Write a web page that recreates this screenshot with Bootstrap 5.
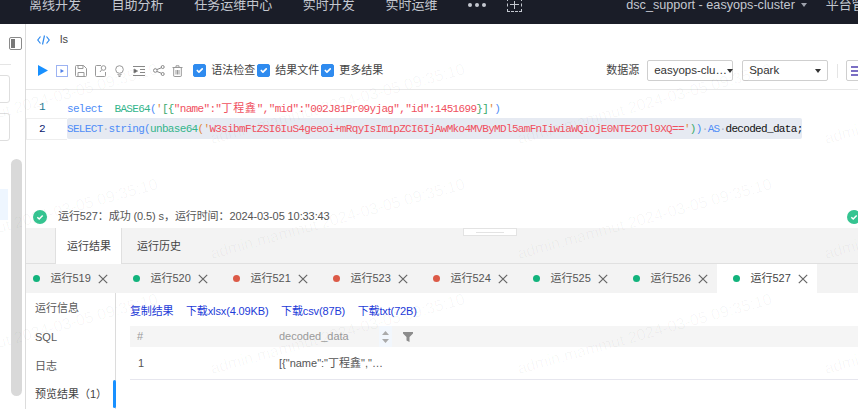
<!DOCTYPE html>
<html lang="zh">
<head>
<meta charset="utf-8">
<title>ls</title>
<link href="https://cdn.jsdelivr.net/npm/bootstrap@5.3.0/dist/css/bootstrap.min.css" rel="stylesheet">
<style>
html,body{height:409px;width:858px;overflow:hidden;margin:0;background:#fff}
body{position:relative;font:11px/1.4 "Liberation Sans","Noto Sans CJK SC",sans-serif;color:#595959}
.topbar{height:24px;background:#1a1d28;color:#c4c8d0;font-size:13px;line-height:14px;padding:0 0 14px 29px;gap:30.6px;overflow:hidden;white-space:nowrap;flex:none}
.topbar>*{flex:none}
.dots{width:18px;gap:3px;margin-right:-10px}
.dots i{width:4px;height:4px;border-radius:50%;background:#c4c8d0}
.plusbox{width:15px;height:14px;border:1px dashed #c4c8d0;position:relative;margin-top:-1px}
.plusbox::before{content:"";position:absolute;left:2px;right:2px;top:5px;height:1px;background:#c4c8d0}
.plusbox::after{content:"";position:absolute;top:2px;bottom:2px;left:6px;width:1px;background:#c4c8d0}
.cluster{margin-left:74px;width:200px;font-size:12.65px}
.cluster::after{content:"";display:inline-block;border:3.5px solid transparent;border-top:4px solid #9ea2ac;border-bottom:0;margin-left:6px;vertical-align:2px}
.platform{margin-left:-31px}
.app{height:385px}
.sidepane{width:26px;border-right:1px solid #dcdcdc;flex:none;overflow:hidden}
.panelicon{width:13px;height:13px;border:1px solid #8a8a8a;border-radius:2px;margin:13px 0 0 9px;padding:1px 6px 1px 1px}
.panelicon i{display:block;height:100%;background:#777}
.sideline{height:1px;width:11px;background:#e5e5e5;margin-top:14px}
.sidebox{height:28px;width:30px;margin:10px 0 0 -20px;border:1px solid #dedede;border-radius:3px}
.sidelow{margin-top:18px}
.sideblue{width:8px;height:31px;background:#eef6ff;margin-top:30px}
.sidescroll{width:11px;height:237px;background:#d9d9d9;border-radius:6px;margin-left:3px}
.mainpane{min-width:0;overflow:hidden}
.filetitle{height:31px;padding-left:11px;gap:10px;color:#444;flex:none}
.toolrow{height:35px;border-bottom:1px solid #e8e8e8;padding:0 0 3px 12px;flex:none;white-space:nowrap;overflow:hidden}
.toolsvg{display:block;flex:none}
.toolrow .toolsvg{margin-right:7.6px}
.toolrow .toolsvg.trash{margin-right:10px}
.form-check-input.chk{width:13px;height:13px;margin:0;border-radius:2px;background-color:#2f8bef;border-color:#2f8bef;flex:none}
.chktext{color:#444;margin:0 2px 0 5px;width:44px;flex:none}
.srclabel{margin-left:221px;color:#444;width:41px;flex:none}
.picker{width:86px;height:21px;border:1px solid #cfcfcf;border-radius:2px;padding:0 6px;margin-right:9px;color:#333;flex:none;font-size:11.5px;line-height:19px;text-align:left}
.picker.dropdown-toggle::after{border-top-color:#333;border-width:4px 3.5px 0;border-bottom:0;margin:0}
.tooldiv{width:1px;height:14px;background:#e5e5e5;margin-right:8px;flex:none}
.listbtn{width:20px;height:21px;border:1px solid #cfcfcf;border-radius:2px;flex:none;padding:5px 4px}
.listbtn i{display:block;height:2px;background:#7b6fc4;margin-bottom:2px}
.editor{height:115px;flex:none;font:11px/22px "Liberation Mono","Noto Sans CJK SC",monospace;padding-top:6px}
.codeln{height:22px}
.lnum{width:41px;padding-left:12px;color:#237893;flex:none;border:1px solid transparent;border-right:0;line-height:20px}
.lnum.cur{color:#0b216f;border-color:#eee}
.lcode{letter-spacing:-.67px;line-height:22px;white-space:pre}
.lcode.sel{background:#e6eaf2;border-radius:2px;height:21px;width:735px;line-height:22px}
.k{color:#4f8df7}.f{color:#33b58b}.s{color:#f0505e}.q{color:#e08a3c}.g{color:#39a96b}.w{color:#a9b4c4}.d{color:#111}
.cjk{letter-spacing:.86px;font-family:"Noto Sans CJK SC",sans-serif}
.statusrow{height:23px;flex:none;padding:1px 0 0 7px;color:#555}
.statusrow .txt{margin-left:11px;letter-spacing:-.1px}
.okicon{flex:none;display:block}
.endok{margin-left:auto;margin-right:-3px}
.tabbar{height:36px;background:#f3f3f3;border-bottom:1px solid #e0e0e0;padding-left:29px;flex:none;position:relative}
.tabbar .nav-link{height:36px;padding:0;line-height:36px;color:#444;font-size:11px;border-radius:0;background:none;border:0}
.tabbar .nav-link.active{width:67px;background:#fff;border:1px solid #e0e0e0;border-width:0 1px;padding-left:11px}
.tabbar .nav-link.other{margin-left:15px}
.tabchip{position:absolute;left:437px;top:0;width:54px;height:8px;background:#fff;border:1px solid #e3e3e3}
.tabchip i{display:block;width:28px;height:1px;background:#e3e3e3;margin:3px auto 0}
.runstrip{height:29px;background:#f3f3f3;flex:none;overflow:hidden;white-space:nowrap}
.runtab{width:100px;flex:none;height:29px;padding-left:16px;color:#555;font-size:11px;position:relative}
.runtab:first-child{margin-left:-9.5px}
.runtab.act{background:#fff;color:#444}
.rundot{width:7px;height:7px;border-radius:50%;background:#12b37c;flex:none;margin-right:11px}
.rundot.bad{background:#dc5a47}
.runx{margin-left:7px;display:block;flex:none}
.reswrap{min-height:0}
.restabs{width:90px;border-right:1px solid #dcdcdc;flex:none;height:116px;padding:1px 0 0 9px;position:relative}
.restabs .nav-link{padding:0;color:#595959;font-size:11px;height:28.8px;line-height:28.8px;background:none;flex:none}
.restabs .nav-link.active{color:#444}
.restabs::after{content:"";position:absolute;right:-1px;bottom:1px;width:3px;height:28px;background:#1890ff;border-radius:2px}
.respane{padding-left:14px;min-width:0}
.reslinks{height:33px;gap:12.5px;padding-top:11px;white-space:nowrap;line-height:15px}
.reslinks a{color:#1d3bd8;text-decoration:none;font-size:11px;letter-spacing:-.13px}
.restable{width:728px;table-layout:fixed;margin:0;font-size:11px;--bs-table-bg:transparent}
.restable th{background:#f5f5f5;color:#9a9a9a;font-weight:400;height:21px;padding:0 0 0 7px;border:0;line-height:21px;vertical-align:middle}
.restable td{height:32px;padding:1px 0 0 8px;border-bottom:1px solid #e6e6ee;color:#555;vertical-align:middle}
.restable th.c2,.restable td.c2{padding-left:0}
.sorter{margin-left:30px;background:#f2f7fd;width:13px;height:21px;display:flex;align-items:center;justify-content:center}
.funnel{margin-left:11px;display:block}
.colnum{width:149px}
.wmlayer{position:absolute;left:0;top:0;width:858px;height:409px;pointer-events:none;overflow:hidden;display:grid;grid-template-columns:repeat(4,307px);grid-auto-rows:115px;padding-top:32px;margin:0;z-index:5}
.wmlayer span{display:block;margin-left:-94px;white-space:nowrap;font:16px/1 "Liberation Sans",sans-serif;color:rgba(0,0,0,.035);align-self:end;transform-origin:left bottom;transform:rotate(-15.5deg);width:260px}
</style>
</head>
<body class="d-flex flex-column">
<div class="topbar d-flex align-items-center">
  <span>离线开发</span><span>自助分析</span><span>任务运维中心</span><span>实时开发</span><span>实时运维</span>
  <span class="dots d-flex align-items-center"><i></i><i></i><i></i></span>
  <span class="plusbox"></span>
  <span class="cluster">dsc_support - easyops-cluster</span>
  <span class="platform">平台管理</span>
</div>
<div class="app d-flex">
  <aside class="sidepane">
    <div class="panelicon"><i></i></div>
    <div class="sideline"></div>
    <div class="sidebox"></div>
    <div class="sidebox"></div>
    <div class="sidelow d-flex"><div class="sideblue"></div><div class="sidescroll"></div></div>
  </aside>
  <main class="mainpane flex-grow-1 d-flex flex-column">
    <div class="filetitle d-flex align-items-center">
      <svg class="toolsvg" width="13" height="10" viewBox="0 0 13 10" fill="none" stroke="#2f8bef" stroke-width="1.2"><path d="M3.5 1.5 .8 5l2.7 3.5M9.500 1.500 12.200 5 9.500 8.500M7.500.5 5.500 9.500"/></svg>
      <span>ls</span>
    </div>
    <div class="toolrow d-flex align-items-center">
      <svg class="toolsvg" width="10" height="11" viewBox="0 0 10 11"><path d="M0 0 10 5.500 0 11z" fill="#1890ff"/></svg>
      <svg class="toolsvg" width="12" height="12" viewBox="0 0 12 12" fill="none"><rect x=".5" y=".5" width="11" height="11" stroke="#9db3f2"/><path d="M4.500 4 8 6 4.500 8z" fill="#4f7fe8"/></svg>
      <svg class="toolsvg" width="12" height="12" viewBox="0 0 12 12" fill="none" stroke="#999"><path d="M1.500.5h7l3 3v7a1 1 0 0 1-1 1h-9a1 1 0 0 1-1-1v-9a1 1 0 0 1 1-1zM3 .5v3h5v-3M3 11.500v-4h6v4"/></svg>
      <svg class="toolsvg" width="12" height="12" viewBox="0 0 12 12" fill="none" stroke="#999"><path d="M6 .5H1.500a1 1 0 0 0-1 1v9a1 1 0 0 0 1 1h8a1 1 0 0 0 1-1V7"/><circle cx="8.500" cy="3" r="2.300"/><path d="M6.500 5 5 7"/></svg>
      <svg class="toolsvg" width="11" height="12" viewBox="0 0 11 12" fill="none" stroke="#999"><circle cx="5.500" cy="4.500" r="3.800"/><path d="M4 9v1h3V9M4.500 11.500h2"/></svg>
      <svg class="toolsvg" width="12" height="10" viewBox="0 0 12 10" fill="none" stroke="#888"><path d="M0 .5h12M7 3.500h5M7 6.500h5M0 9.500h12"/><path d="M1 3v4l3.500-2z" fill="#555"/></svg>
      <svg class="toolsvg" width="12" height="11" viewBox="0 0 12 11" fill="none" stroke="#888"><circle cx="2.300" cy="5.500" r="1.800"/><circle cx="9.700" cy="2" r="1.500"/><circle cx="9.700" cy="9" r="1.500"/><path d="M4 4.500 8.300 2.800M4 6.500 8.300 8.200"/></svg>
      <svg class="toolsvg trash" width="11" height="12" viewBox="0 0 11 12" fill="none" stroke="#999"><path d="M.5 2.500h10M4 2.500V.8h3v1.700M1.700 2.500v8.500a.6.6 0 0 0 .6.5h6.400a.6.6 0 0 0 .6-.5V2.500M4 5v4.500M5.500 5v4.500M7 5v4.500"/></svg>
      <input class="form-check-input chk" type="checkbox" checked aria-label="语法检查"><span class="chktext">语法检查</span>
      <input class="form-check-input chk" type="checkbox" checked aria-label="结果文件"><span class="chktext">结果文件</span>
      <input class="form-check-input chk" type="checkbox" checked aria-label="更多结果"><span class="chktext">更多结果</span>
      <span class="srclabel">数据源</span>
      <div class="picker dropdown-toggle d-flex align-items-center justify-content-between"><span>easyops-clu…</span></div>
      <div class="picker dropdown-toggle d-flex align-items-center justify-content-between"><span>Spark</span></div>
      <div class="tooldiv"></div>
      <div class="listbtn"><i></i><i></i><i></i></div>
    </div>
    <div class="editor">
      <div class="codeln d-flex"><div class="lnum">1</div><div class="lcode"><span class="k">select</span>  <span class="f">BASE64</span><span class="k">(</span><span class="q">'</span><span class="g">[{</span><span class="s">"name":"</span><span class="s cjk">丁程鑫</span><span class="s">","mid":"002J81Pr09yjag","id":1451699</span><span class="g">}]</span><span class="q">'</span><span class="k">)</span></div></div>
      <div class="codeln d-flex"><div class="lnum cur">2</div><div class="lcode sel"><span class="k">SELECT</span><span class="w">·</span><span class="k">string(</span><span class="f">unbase64</span><span class="q">('</span><span class="s">W3sibmFtZSI6IuS4geeoi+mRqyIsIm1pZCI6IjAwMko4MVByMDl5amFnIiwiaWQiOjE0NTE2OTl9XQ==</span><span class="q">'</span><span class="g">)</span><span class="k">)</span><span class="w">·</span><span class="k">AS</span><span class="w">·</span><span class="d">decoded_data;</span></div></div>
    </div>
    <div class="statusrow d-flex align-items-center">
      <svg class="okicon" width="14" height="14" viewBox="0 0 14 14"><circle cx="7" cy="7" r="7" fill="#35c491"/><path d="M4.300 7.200 6.200 9l3.500-3.600" fill="none" stroke="#fff" stroke-width="1.500"/></svg>
      <span class="txt">运行527：成功 (0.5) s，运行时间：2024-03-05 10:33:43</span>
      <svg class="okicon endok" width="14" height="14" viewBox="0 0 14 14"><circle cx="7" cy="7" r="7" fill="#35c491"/><path d="M4.300 7.200 6.200 9l3.500-3.600" fill="none" stroke="#fff" stroke-width="1.500"/></svg>
    </div>
    <div class="tabbar nav">
      <a class="nav-link active" href="#">运行结果</a>
      <a class="nav-link other" href="#">运行历史</a>
      <div class="tabchip"><i></i></div>
    </div>
    <div class="runstrip d-flex">
      <div class="runtab d-flex align-items-center"><span class="rundot"></span><span>运行519</span><svg class="runx" width="10" height="10" viewBox="0 0 10 10" stroke="#666" stroke-width="1.200"><path d="M.8.800l8.400 8.400M9.200.800.800 9.200"/></svg></div>
      <div class="runtab d-flex align-items-center"><span class="rundot"></span><span>运行520</span><svg class="runx" width="10" height="10" viewBox="0 0 10 10" stroke="#666" stroke-width="1.200"><path d="M.8.800l8.400 8.400M9.200.800.800 9.200"/></svg></div>
      <div class="runtab d-flex align-items-center"><span class="rundot bad"></span><span>运行521</span><svg class="runx" width="10" height="10" viewBox="0 0 10 10" stroke="#666" stroke-width="1.200"><path d="M.8.800l8.400 8.400M9.200.800.800 9.200"/></svg></div>
      <div class="runtab d-flex align-items-center"><span class="rundot bad"></span><span>运行523</span><svg class="runx" width="10" height="10" viewBox="0 0 10 10" stroke="#666" stroke-width="1.200"><path d="M.8.800l8.400 8.400M9.200.800.800 9.200"/></svg></div>
      <div class="runtab d-flex align-items-center"><span class="rundot bad"></span><span>运行524</span><svg class="runx" width="10" height="10" viewBox="0 0 10 10" stroke="#666" stroke-width="1.200"><path d="M.8.800l8.400 8.400M9.200.800.800 9.200"/></svg></div>
      <div class="runtab d-flex align-items-center"><span class="rundot"></span><span>运行525</span><svg class="runx" width="10" height="10" viewBox="0 0 10 10" stroke="#666" stroke-width="1.200"><path d="M.8.800l8.400 8.400M9.200.800.800 9.200"/></svg></div>
      <div class="runtab d-flex align-items-center"><span class="rundot"></span><span>运行526</span><svg class="runx" width="10" height="10" viewBox="0 0 10 10" stroke="#666" stroke-width="1.200"><path d="M.8.800l8.400 8.400M9.200.800.800 9.200"/></svg></div>
      <div class="runtab act d-flex align-items-center"><span class="rundot"></span><span>运行527</span><svg class="runx" width="10" height="10" viewBox="0 0 10 10" stroke="#666" stroke-width="1.200"><path d="M.8.800l8.400 8.400M9.200.800.800 9.200"/></svg></div>
    </div>
    <div class="reswrap d-flex flex-grow-1">
      <nav class="restabs nav flex-column flex-nowrap">
        <a class="nav-link" href="#">运行信息</a>
        <a class="nav-link" href="#">SQL</a>
        <a class="nav-link" href="#">日志</a>
        <a class="nav-link active" href="#">预览结果（1）</a>
      </nav>
      <section class="respane flex-grow-1">
        <div class="reslinks d-flex"><a href="#">复制结果</a><a href="#">下载xlsx(4.09KB)</a><a href="#">下载csv(87B)</a><a href="#">下载txt(72B)</a></div>
        <table class="table restable">
          <colgroup><col class="colnum"><col></colgroup>
          <thead><tr><th>#</th><th class="c2"><div class="d-flex align-items-center"><span>decoded_data</span><span class="sorter"><svg width="7" height="12" viewBox="0 0 7 12" fill="#aaa"><path d="M3.500 0 7 4H0zM0 8h7l-3.500 4z"/></svg></span><svg class="funnel" width="10" height="10" viewBox="0 0 10 10"><path d="M0 0h10v1.500L6.500 5v5l-3-1.500V5L0 1.500z" fill="#8c8c8c"/></svg></div></th></tr></thead>
          <tbody><tr><td>1</td><td class="c2">[{"name":"丁程鑫","…</td></tr></tbody>
        </table>
      </section>
    </div>
  </main>
</div>
<div class="wmlayer" aria-hidden="true">
  <span>admin.mammut 2024-03-05 09:35:10</span><span>admin.mammut 2024-03-05 09:35:10</span><span>admin.mammut 2024-03-05 09:35:10</span><span>admin.mammut 2024-03-05 09:35:10</span>
  <span>admin.mammut 2024-03-05 09:35:10</span><span>admin.mammut 2024-03-05 09:35:10</span><span>admin.mammut 2024-03-05 09:35:10</span><span>admin.mammut 2024-03-05 09:35:10</span>
  <span>admin.mammut 2024-03-05 09:35:10</span><span>admin.mammut 2024-03-05 09:35:10</span><span>admin.mammut 2024-03-05 09:35:10</span><span>admin.mammut 2024-03-05 09:35:10</span>
</div>
<script src="https://cdn.jsdelivr.net/npm/bootstrap@5.3.0/dist/js/bootstrap.bundle.min.js"></script>
</body>
</html>
